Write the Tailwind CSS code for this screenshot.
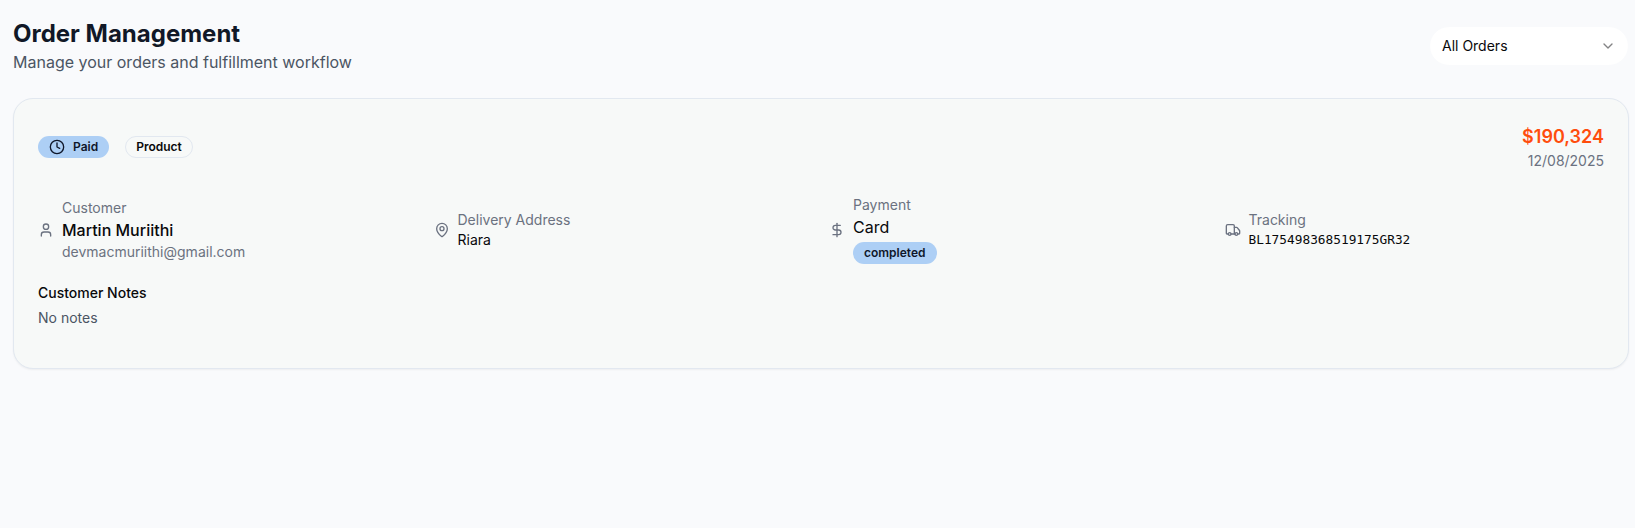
<!DOCTYPE html>
<html lang="en">
<head>
<meta charset="utf-8">
<title>Order Management</title>
<script src="https://cdn.jsdelivr.net/npm/@tailwindcss/browser@4"></script>
</head>
<body class="min-h-screen bg-[#f9fafc] pt-[18px] pl-[13px] pr-[6px] font-['Inter',sans-serif] text-[#09090b]">
<header class="flex items-center justify-between">
  <div>
    <h1 class="text-2xl font-bold text-[#111827]">Order Management</h1>
    <p class="text-base text-[#4b5563]">Manage your orders and fulfillment workflow</p>
  </div>
  <button class="flex h-10 w-[200px] items-center justify-between rounded-[20px] border border-[#f9fafc] bg-white px-3 text-sm">
    <span>All Orders</span>
    <svg class="size-4 opacity-50" viewBox="0 0 24 24" fill="none" stroke="currentColor" stroke-width="2" stroke-linecap="round" stroke-linejoin="round"><path d="m6 9 6 6 6-6"/></svg>
  </button>
</header>
<main class="mt-6 h-[271px] rounded-[20px] border border-[#e2e8f0] bg-[#f7f9f8] p-6 shadow-[0_1px_2px_0_rgba(0,0,0,0.05)]">
  <div class="flex items-center justify-between">
    <div class="flex items-center gap-4">
      <span class="flex h-[22px] items-center rounded-full border border-transparent bg-[#adcff5] bg-origin-border px-2.5 text-xs font-semibold text-[#0f172a]">
        <svg class="mr-2 size-4" viewBox="0 0 24 24" fill="none" stroke="currentColor" stroke-width="2" stroke-linecap="round" stroke-linejoin="round"><circle cx="12" cy="12" r="10"/><path d="M12 6v6l4 2"/></svg>
        Paid
      </span>
      <span class="flex h-[22px] items-center rounded-full border border-[#e2e8f0] px-2.5 text-xs font-semibold">Product</span>
    </div>
    <div class="text-right">
      <p class="text-lg/7 font-semibold text-[#ff4d0d]">$190,324</p>
      <p class="text-sm text-[#6b7280]">12/08/2025</p>
    </div>
  </div>
  <div class="mt-6 grid h-[70px] grid-cols-4 items-center gap-4">
    <div class="flex items-center gap-2">
      <svg class="size-4 text-[#6b7280]" viewBox="0 0 24 24" fill="none" stroke="currentColor" stroke-width="2" stroke-linecap="round" stroke-linejoin="round"><path d="M19 21v-2a4 4 0 0 0-4-4H9a4 4 0 0 0-4 4v2"/><circle cx="12" cy="7" r="4"/></svg>
      <div>
        <p class="text-sm text-[#6b7280]">Customer</p>
        <p class="font-medium">Martin Muriithi</p>
        <p class="text-sm text-[#6b7280]">devmacmuriithi@gmail.com</p>
      </div>
    </div>
    <div class="flex items-center gap-2">
      <svg class="size-4 text-[#6b7280]" viewBox="0 0 24 24" fill="none" stroke="currentColor" stroke-width="2" stroke-linecap="round" stroke-linejoin="round"><path d="M20 10c0 4.993-5.539 10.193-7.399 11.799a1 1 0 0 1-1.202 0C9.539 20.193 4 14.993 4 10a8 8 0 0 1 16 0"/><circle cx="12" cy="10" r="3"/></svg>
      <div>
        <p class="text-sm text-[#6b7280]">Delivery Address</p>
        <p class="text-sm">Riara</p>
      </div>
    </div>
    <div class="flex items-center gap-2">
      <svg class="size-4 text-[#6b7280]" viewBox="0 0 24 24" fill="none" stroke="currentColor" stroke-width="2" stroke-linecap="round" stroke-linejoin="round"><path d="M12 2v20"/><path d="M17 5H9.500a3.500 3.500 0 0 0 0 7h5a3.500 3.500 0 0 1 0 7H6"/></svg>
      <div class="h-[70px]">
        <p class="text-sm text-[#6b7280]">Payment</p>
        <p>Card</p>
        <span class="mt-[3px] flex h-[22px] items-center rounded-full bg-[#adcff5] px-[11px] text-xs font-semibold text-[#0f172a]">completed</span>
      </div>
    </div>
    <div class="flex items-center gap-2">
      <svg class="size-4 text-[#6b7280]" viewBox="0 0 24 24" fill="none" stroke="currentColor" stroke-width="2" stroke-linecap="round" stroke-linejoin="round"><path d="M14 18V6a2 2 0 0 0-2-2H4a2 2 0 0 0-2 2v11a1 1 0 0 0 1 1h2"/><path d="M15 18H9"/><path d="M19 18h2a1 1 0 0 0 1-1v-3.650a1 1 0 0 0-.22-.624l-3.480-4.350A1 1 0 0 0 17.520 8H14"/><circle cx="17" cy="18" r="2"/><circle cx="7" cy="18" r="2"/></svg>
      <div>
        <p class="text-sm text-[#6b7280]">Tracking</p>
        <p class="font-['DejaVu_Sans_Mono',monospace] text-[12.8px]/5">BL175498368519175GR32</p>
      </div>
    </div>
  </div>
  <section class="mt-[18px]">
    <h2 class="text-sm font-medium">Customer Notes</h2>
    <p class="mt-[5px] text-sm text-[#4b5563]">No notes</p>
  </section>
</main>
</body>
</html>
